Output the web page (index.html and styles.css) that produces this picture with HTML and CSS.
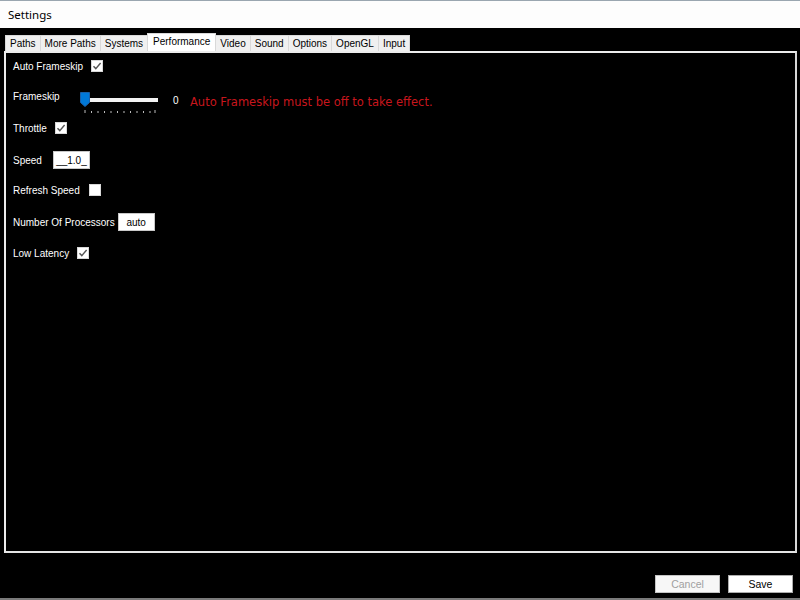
FILE: index.html
```html
<!DOCTYPE html>
<html>
<head>
<meta charset="utf-8">
<link rel="stylesheet" href="styles.css">
</head>
<body>
<div class="window">
  <div class="titlebar">Settings</div>
  <div class="tabs">
    <div class="tab">Paths</div>
    <div class="tab">More Paths</div>
    <div class="tab">Systems</div>
    <div class="tab active">Performance</div>
    <div class="tab">Video</div>
    <div class="tab">Sound</div>
    <div class="tab">Options</div>
    <div class="tab">OpenGL</div>
    <div class="tab">Input</div>
  </div>
  <div class="panel">
    <div class="row r1">
      <span class="label">Auto Frameskip</span>
      <svg class="check" width="12" height="12" viewBox="0 0 12 12"><rect x="0.5" y="0.5" width="11" height="11" fill="#fff" stroke="#d8d8d8"/><path d="M2.5 6.2 L4.8 8.6 L9.6 3" fill="none" stroke="#555" stroke-width="1.4"/></svg>
    </div>
    <div class="row r2">
      <span class="label">Frameskip</span>
      <svg class="slider" width="80" height="24" viewBox="0 0 80 24">
        <rect x="8" y="6" width="70" height="4" fill="#f2f2f2"/>
        <path d="M0.5 0.5 H9.5 V10.5 L5 14.5 L0.5 10.5 Z" fill="#0078d7" stroke="#1a5fa8" stroke-width="1"/>
        <g fill="#bbb">
          <rect x="4.5" y="18" width="1" height="3"/>
          <rect x="11" y="19" width="1" height="2"/>
          <rect x="17.5" y="19" width="1" height="2"/>
          <rect x="24" y="19" width="1" height="2"/>
          <rect x="30.5" y="19" width="1" height="2"/>
          <rect x="37" y="19" width="1" height="2"/>
          <rect x="43.5" y="19" width="1" height="2"/>
          <rect x="50" y="19" width="1" height="2"/>
          <rect x="56.5" y="19" width="1" height="2"/>
          <rect x="63" y="19" width="1" height="2"/>
          <rect x="69.5" y="19" width="1" height="2"/>
          <rect x="74.5" y="18" width="1" height="3"/>
        </g>
      </svg>
      <span class="value">0</span>
      <span class="warn">Auto Frameskip must be off to take effect.</span>
    </div>
    <div class="row r3">
      <span class="label">Throttle</span>
      <svg class="check" width="12" height="12" viewBox="0 0 12 12"><rect x="0.5" y="0.5" width="11" height="11" fill="#fff" stroke="#d8d8d8"/><path d="M2.5 6.2 L4.8 8.6 L9.6 3" fill="none" stroke="#555" stroke-width="1.4"/></svg>
    </div>
    <div class="row r4">
      <span class="label">Speed</span>
      <span class="field">__1.0_</span>
    </div>
    <div class="row r5">
      <span class="label">Refresh Speed</span>
      <svg class="check" width="12" height="12" viewBox="0 0 12 12"><rect x="0.5" y="0.5" width="11" height="11" fill="#fff" stroke="#d8d8d8"/></svg>
    </div>
    <div class="row r6">
      <span class="label">Number Of Processors</span>
      <span class="field narrow">auto</span>
    </div>
    <div class="row r7">
      <span class="label">Low Latency</span>
      <svg class="check" width="12" height="12" viewBox="0 0 12 12"><rect x="0.5" y="0.5" width="11" height="11" fill="#fff" stroke="#d8d8d8"/><path d="M2.5 6.2 L4.8 8.6 L9.6 3" fill="none" stroke="#555" stroke-width="1.4"/></svg>
    </div>
  </div>
  <div class="footer">
    <div class="btn disabled">Cancel</div>
    <div class="btn">Save</div>
  </div>
</div>
</body>
</html>
```
FILE: styles.css
```css
html, body {
  margin: 0;
  padding: 0;
  background: #000;
}
.window {
  width: 800px;
  height: 600px;
  background: #000;
  font-family: "Liberation Sans", Arial, sans-serif;
  font-size: 10px;
  color: #fff;
  display: flex;
  flex-direction: column;
  overflow: hidden;
}
.titlebar {
  background: #fdfdfd;
  border-top: 1px solid #9aa6b0;
  color: #000;
  font-family: "Noto Sans", "Liberation Sans", sans-serif;
  font-size: 11.5px;
  padding-left: 8px;
  display: flex;
  align-items: center;
  box-sizing: border-box;
  height: 28px;
}
.tabs {
  margin-top: 5px;
  padding-left: 5px;
  height: 18px;
  display: flex;
  align-items: flex-end;
}
.tab {
  height: 16px;
  box-sizing: border-box;
  background: #f0f0f0;
  color: #000;
  border: 1px solid #d9d9d9;
  border-bottom: none;
  margin-right: -1px;
  padding: 0 4px;
  display: flex;
  align-items: center;
  font-size: 10px;
}
.tab.active {
  height: 18px;
  background: #fff;
  padding: 0 5px 2px;
  position: relative;
  z-index: 1;
}
.panel {
  margin: 0 3px 0 4px;
  height: 502px;
  box-sizing: border-box;
  border: 2px solid #ececec;
  border-right-color: #d8d8d8;
  border-bottom-color: #e4e4e4;
  padding: 3px 0 0 7px;
  display: flex;
  flex-direction: column;
}
.row {
  height: 20px;
  display: flex;
  align-items: center;
}
.r2 { margin-top: 14px; height: 24px; margin-bottom: -4px; align-items: flex-start; }
.r2 .label { margin-top: 1px; width: 67px; margin-right: 0; }
.r2 .value, .r2 .warn { margin-top: 5px; }
.r3 { margin-top: 8px; }
.r4 { margin-top: 12px; }
.r5 { margin-top: 10px; }
.r6 { margin-top: 12px; }
.r7 { margin-top: 11px; }
.label {
  color: #fff;
  margin-right: 8px;
}
.r4 .label { margin-right: 11px; }
.r6 .label { margin-right: 3px; }
.r7 .label { margin-right: 8px; }
.r5 .label { margin-right: 9px; }
.r3 .label { margin-right: 8px; }
.check { display: block; }
.slider {
  display: block;
  margin-top: 2px;
}
.value {
  margin-left: 13px;
  width: 17px;
}
.warn {
  color: #c8161d;
  font-family: "DejaVu Sans", Verdana, sans-serif;
  font-size: 11.5px;
}
.field {
  width: 37px;
  height: 18px;
  box-sizing: border-box;
  background: #fff;
  color: #000;
  border: 1px solid #c8c8c8;
  display: flex;
  align-items: center;
  justify-content: center;
}
.footer {
  flex: 1;
  display: flex;
  justify-content: flex-end;
  align-items: flex-start;
  padding: 22px 7px 0 0;
  gap: 8px;
  border-bottom: 2px solid #7a7a7a;
  box-sizing: border-box;
}
.btn {
  width: 65px;
  height: 18px;
  box-sizing: border-box;
  background: #fff;
  border: 1px solid #adadad;
  color: #000;
  display: flex;
  align-items: center;
  justify-content: center;
  font-size: 10.5px;
}
.btn.disabled {
  background: #f7f7f7;
  border-color: #c4c4c4;
  color: #a0a0a0;
}
```
